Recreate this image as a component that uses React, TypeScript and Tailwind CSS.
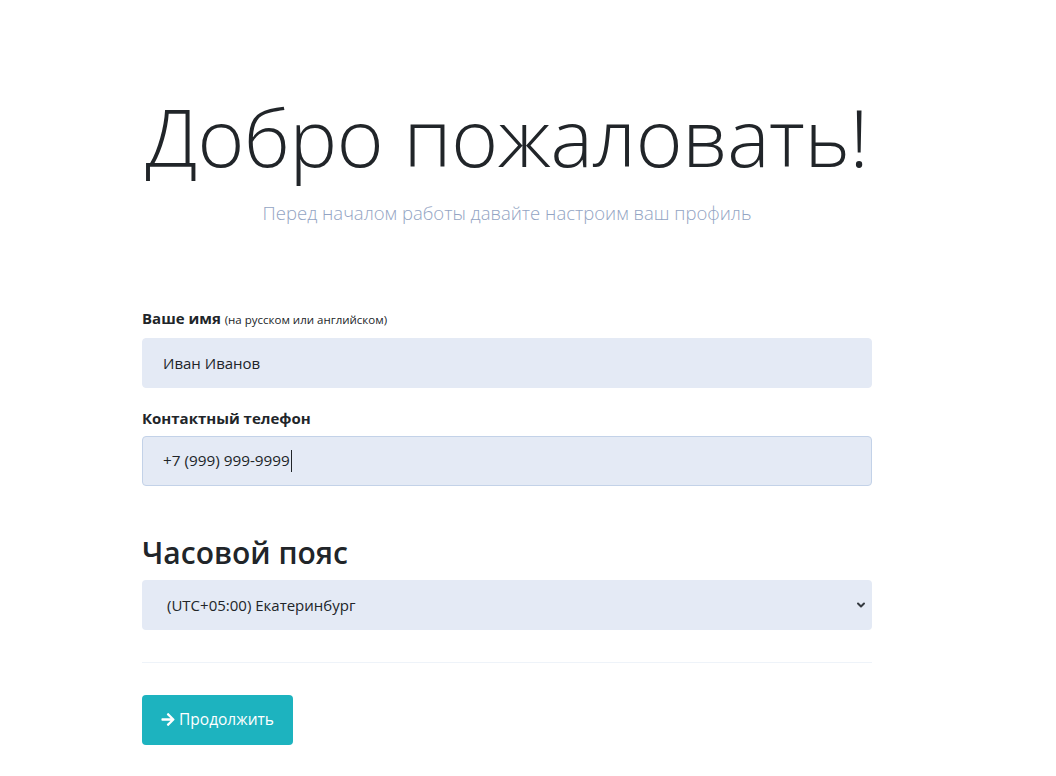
import { ChevronDown } from "lucide-react";

function ArrowIcon() {
  return (
    <svg viewBox="0 0 448 512" className="h-[15px] w-[14px]" fill="currentColor">
      <path d="M190.5 66.9l22.2-22.2c9.4-9.4 24.6-9.4 33.9 0L441 239c9.4 9.4 9.4 24.6 0 33.9L246.6 467.3c-9.4 9.4-24.6 9.4-33.9 0l-22.2-22.2c-9.5-9.5-9.3-25 .4-34.3L311.4 296H24c-13.3 0-24-10.7-24-24v-32c0-13.3 10.7-24 24-24h287.4L190.9 101.2c-9.8-9.3-10-24.8-.4-34.3z" />
    </svg>
  );
}

export default function App() {
  return (
    <div className="min-h-screen bg-white text-[#212529]">
      <div className="ml-[142px] w-[730px] pt-[88px] font-['Open_Sans','Noto_Sans',sans-serif]">
        <div className="text-center">
          <h1 className="text-[80px] font-light leading-[1.2] tracking-[-0.4px] text-[#212529]">Добро пожаловать!</h1>
          <p className="mt-[15px] text-[18.5px] font-light text-[#93a4c3]">Перед началом работы давайте настроим ваш профиль</p>
        </div>

        <form className="mt-[79px]" onSubmit={(e) => e.preventDefault()}>
          <label className="block text-[15px] font-bold leading-[24px]">
            Ваше имя <span className="text-[11.5px] font-normal">(на русском или английском)</span>
          </label>
          <input
            defaultValue="Иван Иванов"
            className="mt-[6px] block h-[50px] w-full rounded-[4px] border border-[#e4eaf5] bg-[#e4eaf5] px-[20px] text-[15px] text-[#212529] outline-none"
          />

          <label className="mt-[18px] block text-[15px] font-bold leading-[24px]">Контактный телефон</label>
          <div className="mt-[6px] flex h-[50px] w-full items-center rounded-[4px] border border-[#c3d2e8] bg-[#e4eaf5] px-[20px] text-[15.3px]">
            <span>+7 (999) 999-9999</span>
            <span className="ml-[1px] h-[22px] w-[1px] bg-[#212529]" />
          </div>

          <h3 className="mt-[49px] text-[30px] font-semibold leading-[1.2]">Часовой пояс</h3>
          <div className="mt-[9px] flex h-[50px] w-full items-center rounded-[4px] bg-[#e4eaf5] pl-[25px] pr-[5px] text-[15px]">
            <span>(UTC+05:00) Екатеринбург</span>
            <ChevronDown className="ml-auto h-[12px] w-[12px] text-[#343a40]" strokeWidth={4} />
          </div>

          <hr className="mt-[32px] border-t border-[#eef3f9]" />

          <button
            type="submit"
            className="mt-[32px] flex h-[50px] w-[151px] items-center justify-center gap-[4px] rounded-[4px] bg-[#1db3bf] text-[15.5px] text-white"
          >
            <ArrowIcon />
            Продолжить
          </button>
        </form>
      </div>
    </div>
  );
}
